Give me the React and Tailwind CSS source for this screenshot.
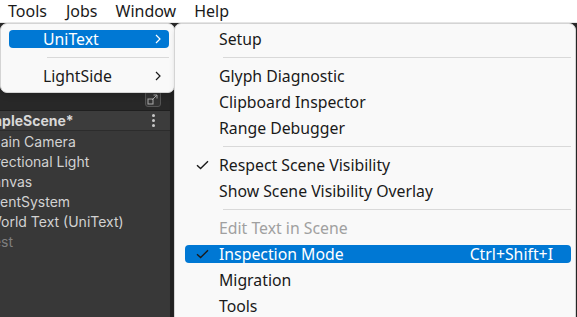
import React from 'react';

const menuFont = { fontFamily: '"Noto Sans", "Open Sans", sans-serif' };

const Check = ({ className }) => (
    <svg width="13" height="10" viewBox="0 0 13 10" className={className}>
        <path d="M1 5.2 L4.6 8.6 L12 1.2" fill="none" stroke="currentColor" strokeWidth="1.4" />
    </svg>
);

const Chevron = ({ className }) => (
    <svg width="6" height="10" viewBox="0 0 6 10" className={className}>
        <path d="M1 1 L5 5 L1 9" fill="none" stroke="currentColor" strokeWidth="1.2" />
    </svg>
);

const Separator = ({ inset }) => (
    <div className="h-[11px] flex items-center">
        <div className={`h-px bg-[#d9d9d9] w-full ${inset}`} />
    </div>
);

const SubItem = ({ label, checked, active, disabled, shortcut }) => (
    <div className="h-[26px] py-[4px] pl-[10px] pr-[4px]">
        <div className={`h-[18px] flex items-center rounded-[4px] ${active ? 'bg-[#0078d4] text-white' : disabled ? 'text-[#a0a0a0]' : 'text-[#1a1a1a]'}`}>
            <div className="w-[34px] flex justify-center pl-px">
                {checked && <Check className="text-[#1a1a1a]" />}
            </div>
            <span className="text-[15.8px] leading-none mt-[2px]">{label}</span>
            {shortcut && <span className="ml-auto mr-[18px] text-[15.8px] leading-none mt-[2px]">{shortcut}</span>}
        </div>
    </div>
);

const HierRow = ({ label, dim, offset }) => (
    <div className={`h-5 flex items-center whitespace-nowrap text-[14px] ${dim ? 'text-[#7f7f7f]' : 'text-[#d2d2d2]'} ${offset}`}>
        {label}
    </div>
);

export default function App() {
    return (
        <div className="relative w-[577px] h-[317px] overflow-hidden bg-[#191919]">
            <div className="h-[23px] bg-white border-b border-[#e6e6e6] flex items-center text-[16px] text-[#1a1a1a]" style={menuFont}>
                <span className="ml-[8px]">Tools</span>
                <span className="ml-[19px]">Jobs</span>
                <span className="ml-[18px]">Window</span>
                <span className="ml-[18px]">Help</span>
            </div>

            <div className="flex h-[294px]">
                <div className="w-[170px] bg-[#383838] flex flex-col overflow-hidden" style={{ fontFamily: 'Inter, "Noto Sans", sans-serif' }}>
                    <div className="h-[88px] bg-[#282828] border-b border-[#1f1f1f] flex items-end justify-end pr-[9px] pb-[3px] shrink-0">
                        <div className="w-[16px] h-[16px] rounded-[3px] border border-[#555] bg-[#333] flex items-center justify-center">
                            <svg width="12" height="12" viewBox="0 0 12 12">
                                <rect x="1" y="6" width="5" height="5" fill="none" stroke="#aaa" strokeWidth="1" />
                                <path d="M5 7 L10 2 M6.5 2 H10 V5.5" fill="none" stroke="#aaa" strokeWidth="1" />
                            </svg>
                        </div>
                    </div>
                    <div className="h-[20px] bg-[#3c3c3c] border-b border-[#2c2c2c] flex items-center justify-between shrink-0">
                        <span className="ml-[-28px] text-[14px] font-bold text-[#d8d8d8] whitespace-nowrap">SampleScene*</span>
                        <div className="mr-[15px] flex flex-col gap-[2px]">
                            <span className="w-[3px] h-[3px] rounded-full bg-[#c8c8c8]" />
                            <span className="w-[3px] h-[3px] rounded-full bg-[#c8c8c8]" />
                            <span className="w-[3px] h-[3px] rounded-full bg-[#c8c8c8]" />
                        </div>
                    </div>
                    <div>
                        <HierRow label="Main Camera" offset="ml-[-12px]" />
                        <HierRow label="Directional Light" offset="ml-[-18px]" />
                        <HierRow label="Canvas" offset="ml-[-17px]" />
                        <HierRow label="EventSystem" offset="ml-[-16px]" />
                        <HierRow label="World Text (UniText)" offset="ml-[-12px]" />
                        <HierRow label="Test" dim offset="ml-[-15px]" />
                    </div>
                </div>
                <div className="w-[3px] bg-[#232323]" />
                <div className="flex-1 bg-[#282828]" />
            </div>

            {/* Tools menu */}
            <div className="absolute left-0 top-[23px] w-[175px] h-[70px] bg-[#f9f9f9] border border-[#d4d4d4] rounded-[7px] shadow-md pt-[2px]" style={menuFont}>
                <div className="h-[26px] py-[4px] pl-[8px] pr-[5px]">
                    <div className="h-[18px] rounded-[4px] bg-[#0078d4] text-white flex items-center pl-[34px] pr-[8px]">
                        <span className="text-[15.8px] leading-none mt-[2px]">UniText</span>
                        <Chevron className="ml-auto" />
                    </div>
                </div>
                <div className="h-[11px] flex items-center pl-[46px] pr-[5px]">
                    <div className="h-px w-full bg-[#d9d9d9]" />
                </div>
                <div className="h-[26px] flex items-center pl-[42px] pr-[13px] text-[#1a1a1a]">
                    <span className="text-[15.8px] leading-none mt-[2px]">LightSide</span>
                    <Chevron className="ml-auto" />
                </div>
            </div>

            {/* UniText submenu */}
            <div className="absolute left-[174px] top-[23px] right-[1px] h-[310px] bg-[#f9f9f9] border border-[#d4d4d4] rounded-[7px] shadow-md pt-[2px]" style={menuFont}>
                <SubItem label="Setup" />
                <Separator inset="ml-[48px] mr-[4px]" />
                <SubItem label="Glyph Diagnostic" />
                <SubItem label="Clipboard Inspector" />
                <SubItem label="Range Debugger" />
                <Separator inset="ml-[48px] mr-[4px]" />
                <SubItem label="Respect Scene Visibility" checked />
                <SubItem label="Show Scene Visibility Overlay" />
                <Separator inset="ml-[48px] mr-[4px]" />
                <SubItem label="Edit Text in Scene" disabled />
                <SubItem label="Inspection Mode" checked active shortcut="Ctrl+Shift+I" />
                <SubItem label="Migration" />
                <SubItem label="Tools" />
            </div>
        </div>
    );
}
